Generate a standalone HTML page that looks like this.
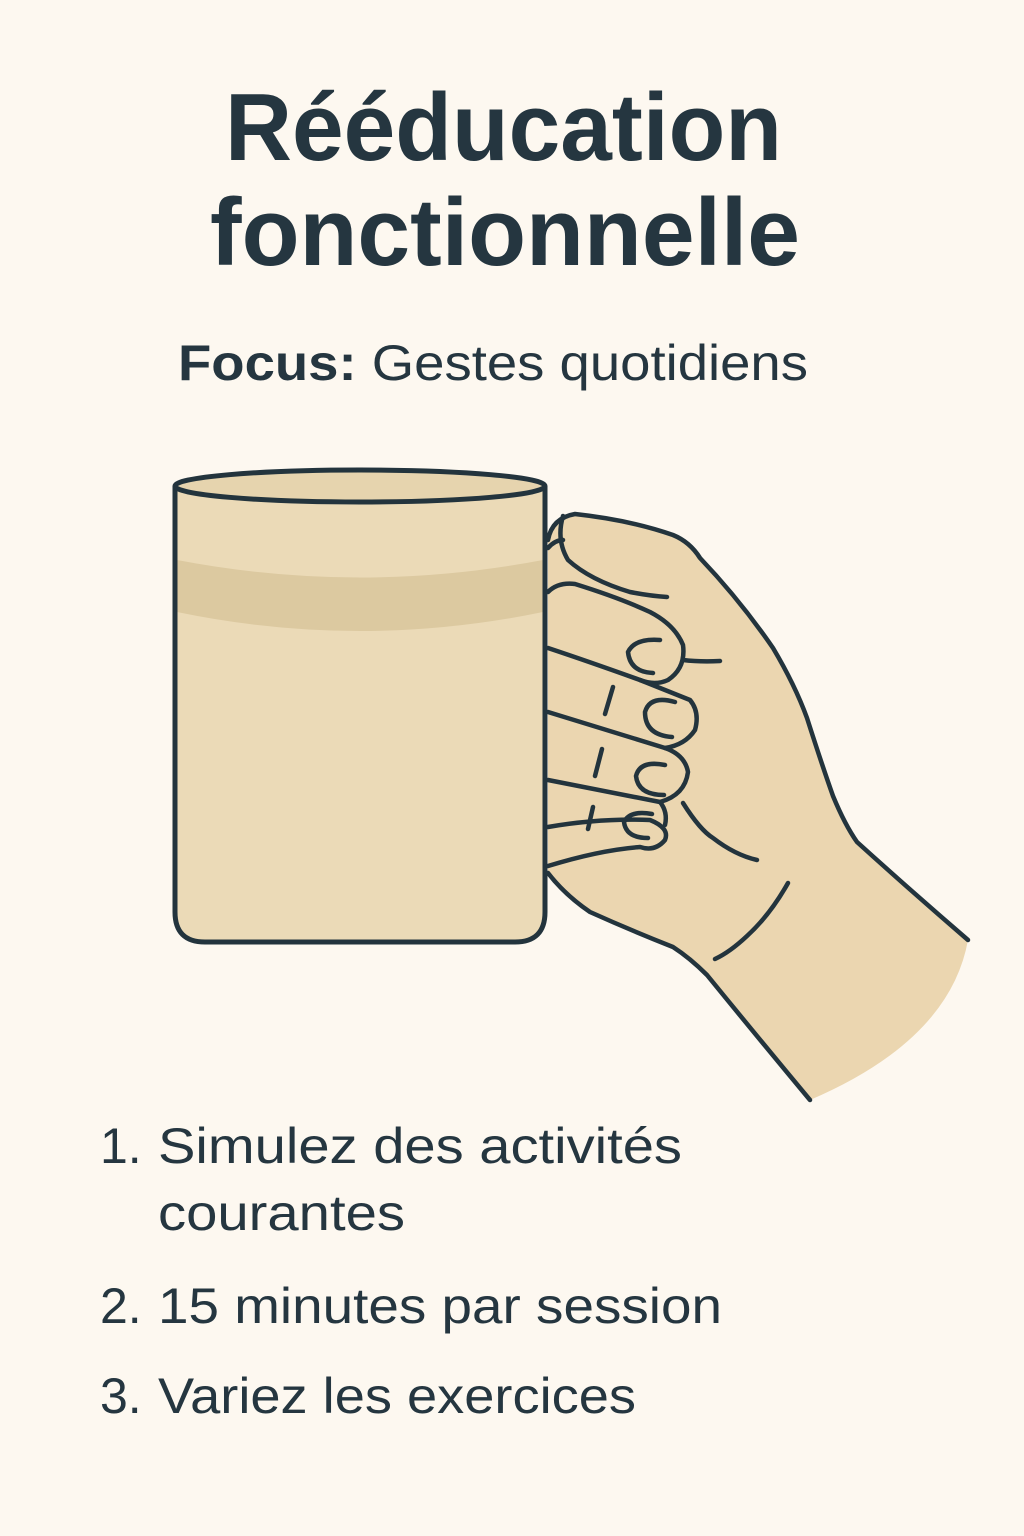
<!DOCTYPE html>
<html><head><meta charset="utf-8"><style>
html,body{margin:0;padding:0;background:#fdf8f0;}
svg{display:block}
text{font-family:"Liberation Sans",sans-serif;fill:#253640;}
</style></head><body>
<svg width="1024" height="1536" viewBox="0 0 1024 1536" xmlns="http://www.w3.org/2000/svg">
<rect width="1024" height="1536" fill="#fdf8f0"/>
<text x="225" y="160" font-size="96" font-weight="bold" textLength="557" lengthAdjust="spacingAndGlyphs">Rééducation</text>
<text x="210" y="265" font-size="96" font-weight="bold" textLength="590" lengthAdjust="spacingAndGlyphs">fonctionnelle</text>
<text x="178" y="380" font-size="50" textLength="630" lengthAdjust="spacingAndGlyphs"><tspan font-weight="bold">Focus:</tspan> Gestes quotidiens</text>

<!-- cup -->
<path d="M175 486 L175 912 Q175 942 205 942 L515 942 Q545 942 545 912 L545 486 Z" fill="#ebdab7"/>
<path d="M177 560 Q360 595 543 560 L543 612 Q360 650 177 612 Z" fill="#dcc9a0"/>
<ellipse cx="360" cy="486" rx="185" ry="16" fill="#e6d4ae"/>
<path d="M175 486 L175 912 Q175 942 205 942 L515 942 Q545 942 545 912 L545 486" fill="none" stroke="#23343d" stroke-width="5"/>
<ellipse cx="360" cy="486" rx="185" ry="16" fill="none" stroke="#23343d" stroke-width="5"/>

<!-- hand -->
<path d="M548 540 Q552 518 575 514 Q630 520 673 535 Q690 542 700 558 Q740 600 773 648 Q795 685 807 718 Q822 765 833 796 Q845 825 857 842 Q910 890 968 940 Q950 1040 810 1100 Q760 1040 707 975 Q690 958 673 947 Q630 930 590 912 Q565 895 548 873 Z" fill="#ebd6b0"/>
<g fill="none" stroke="#23343d" stroke-width="4.5" stroke-linecap="round" stroke-linejoin="round">
<path d="M548 540 Q552 518 575 514 Q630 520 673 535 Q690 542 700 558 Q740 600 773 648 Q795 685 807 718 Q822 765 833 796 Q845 825 857 842 Q910 890 968 940"/>
<path d="M810 1100 Q760 1040 707 975 Q690 958 673 947 Q630 930 590 912 Q565 895 548 873"/>
<path d="M548 548 Q555 540 563 540 M563 516 Q556 540 568 560 Q590 580 630 592 Q650 596 667 597"/>
<path d="M548 592 Q558 582 575 584 Q620 598 650 612 Q675 625 683 645 Q686 668 668 680 Q655 686 640 680 Q590 662 548 648"/>
<path d="M683 660 Q700 662 720 661"/>
<path d="M640 680 Q665 690 690 700 Q700 712 695 730 Q685 745 665 748 Q600 728 548 712"/>
<path d="M665 748 Q685 755 688 772 Q685 795 660 802 Q600 790 548 780"/>
<path d="M548 827 Q600 818 650 820 Q670 828 665 840 Q655 852 640 847 Q600 850 548 866"/>
<path d="M660 802 Q668 812 665 825"/>
<path d="M660 640 Q635 638 628 652 Q630 672 653 673"/>
<path d="M675 702 Q650 695 645 712 Q645 735 672 737"/>
<path d="M665 765 Q640 760 636 776 Q638 795 664 795"/>
<path d="M652 814 Q630 810 624 822 Q626 838 648 838"/>
<path d="M613 687 L605 714 M602 749 L595 776 M593 807 L588 829"/>
<path d="M683 803 Q700 830 713 838 Q735 855 757 860"/>
<path d="M788 883 Q770 915 747 936 Q730 952 715 959"/>
</g>

<text x="100" y="1163" font-size="50">1.</text>
<text x="158" y="1163" font-size="50" textLength="524" lengthAdjust="spacingAndGlyphs">Simulez des activités</text>
<text x="158" y="1230" font-size="50" textLength="247" lengthAdjust="spacingAndGlyphs">courantes</text>
<text x="100" y="1323" font-size="50">2.</text>
<text x="158" y="1323" font-size="50" textLength="564" lengthAdjust="spacingAndGlyphs">15 minutes par session</text>
<text x="100" y="1413" font-size="50">3.</text>
<text x="158" y="1413" font-size="50" textLength="478" lengthAdjust="spacingAndGlyphs">Variez les exercices</text>
</svg>
</body></html>
